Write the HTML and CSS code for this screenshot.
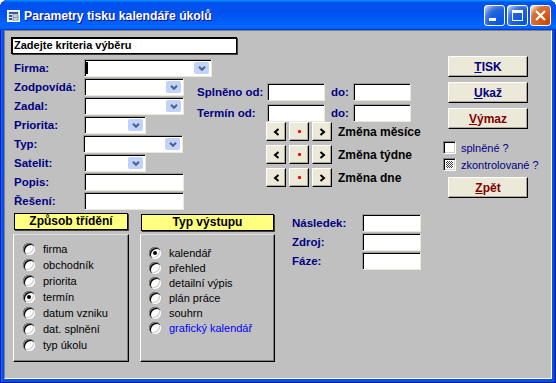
FILE: index.html
```html
<!DOCTYPE html>
<html lang="cs">
<head>
  <meta charset="UTF-8" />
  <title>Parametry tisku kalendáře úkolů</title>
  <link rel="stylesheet" href="styles.css">
</head>
<body>
  <div class="window">
    <!-- TITULKOVÝ PRUH -->
    <div class="titlebar">
      <svg class="app-icon" width="13" height="12" viewBox="0 0 13 12">
        <rect x="0.5" y="0.5" width="12" height="11" fill="#dfe7f5" stroke="#ffffff"/>
        <rect x="2" y="2" width="9" height="2" fill="#3d5a8c"/>
        <rect x="2" y="5" width="3" height="2" fill="#3d5a8c"/>
        <rect x="6" y="5" width="5" height="2" fill="#ffffff" stroke="#3d5a8c" stroke-width="0.6"/>
        <rect x="2" y="8" width="3" height="2" fill="#3d5a8c"/>
        <rect x="6" y="8" width="5" height="2" fill="#ffffff" stroke="#3d5a8c" stroke-width="0.6"/>
      </svg>
      <span class="title">Parametry tisku kalendáře úkolů</span>
      <div class="controls">
        <span class="ctl">
          <svg width="19" height="19"><rect x="4" y="12" width="7" height="3" fill="#fff"/></svg>
        </span>
        <span class="ctl">
          <svg width="19" height="19"><rect x="4.5" y="4.5" width="10" height="10" fill="none" stroke="#fff"/><rect x="4" y="4" width="11" height="3" fill="#fff"/></svg>
        </span>
        <span class="ctl close">
          <svg width="19" height="19"><path d="M5 5 L14 14 M14 5 L5 14" stroke="#fff" stroke-width="2.2"/></svg>
        </span>
      </div>
    </div>

    <div class="client">
      <div class="hint">Zadejte kriteria výběru</div>

      <div class="main">
        <!-- FILTRY -->
        <div class="filters">
          <span class="label">Firma:</span>
          <span class="field w128"><span class="caret"></span><span class="drop"><svg width="8" height="5"><path d="M1 0.8 L4 3.8 L7 0.8" fill="none" stroke="#4d6185" stroke-width="2"/></svg></span></span>
          <span class="label">Zodpovídá:</span>
          <span class="field w100"><span class="drop"><svg width="8" height="5"><path d="M1 0.8 L4 3.8 L7 0.8" fill="none" stroke="#4d6185" stroke-width="2"/></svg></span></span>
          <span class="label">Zadal:</span>
          <span class="field w100"><span class="drop"><svg width="8" height="5"><path d="M1 0.8 L4 3.8 L7 0.8" fill="none" stroke="#4d6185" stroke-width="2"/></svg></span></span>
          <span class="label">Priorita:</span>
          <span class="field w62"><span class="drop"><svg width="8" height="5"><path d="M1 0.8 L4 3.8 L7 0.8" fill="none" stroke="#4d6185" stroke-width="2"/></svg></span></span>
          <span class="label">Typ:</span>
          <span class="field w100 shift"><span class="drop"><svg width="8" height="5"><path d="M1 0.8 L4 3.8 L7 0.8" fill="none" stroke="#4d6185" stroke-width="2"/></svg></span></span>
          <span class="label">Satelit:</span>
          <span class="field w62"><span class="drop"><svg width="8" height="5"><path d="M1 0.8 L4 3.8 L7 0.8" fill="none" stroke="#4d6185" stroke-width="2"/></svg></span></span>
          <span class="label">Popis:</span>
          <span class="field w100"></span>
          <span class="label">Řešení:</span>
          <span class="field w100"></span>
        </div>

        <!-- TERMÍNY -->
        <div class="dates">
          <div class="range">
            <span class="label">Splněno od:</span>
            <span class="field"></span>
            <span class="label do">do:</span>
            <span class="field"></span>
            <span class="label">Termín od:</span>
            <span class="field"></span>
            <span class="label do">do:</span>
            <span class="field"></span>
          </div>
          <div class="nav">
            <div class="nav-row">
              <span class="navbtn"><svg width="7" height="8"><path d="M5.5 1 L2 4 L5.5 7" fill="none" stroke="#000" stroke-width="2"/></svg></span>
              <span class="navbtn"><span class="dot"></span></span>
              <span class="navbtn"><svg width="7" height="8"><path d="M1.5 1 L5 4 L1.5 7" fill="none" stroke="#000" stroke-width="2"/></svg></span>
              <span class="nav-label">Změna měsíce</span>
            </div>
            <div class="nav-row">
              <span class="navbtn"><svg width="7" height="8"><path d="M5.5 1 L2 4 L5.5 7" fill="none" stroke="#000" stroke-width="2"/></svg></span>
              <span class="navbtn"><span class="dot"></span></span>
              <span class="navbtn"><svg width="7" height="8"><path d="M1.5 1 L5 4 L1.5 7" fill="none" stroke="#000" stroke-width="2"/></svg></span>
              <span class="nav-label">Změna týdne</span>
            </div>
            <div class="nav-row">
              <span class="navbtn"><svg width="7" height="8"><path d="M5.5 1 L2 4 L5.5 7" fill="none" stroke="#000" stroke-width="2"/></svg></span>
              <span class="navbtn"><span class="dot"></span></span>
              <span class="navbtn"><svg width="7" height="8"><path d="M1.5 1 L5 4 L1.5 7" fill="none" stroke="#000" stroke-width="2"/></svg></span>
              <span class="nav-label">Změna dne</span>
            </div>
          </div>
        </div>

        <!-- TLAČÍTKA -->
        <div class="actions">
          <span class="btn"><u>T</u>ISK</span>
          <span class="btn"><u>U</u>kaž</span>
          <span class="btn red"><u>V</u>ýmaz</span>
          <div class="checks">
            <div class="check-row"><span class="check"></span>splněné ?</div>
            <div class="check-row"><span class="check mixed"></span>zkontrolované ?</div>
          </div>
          <span class="btn red back"><u>Z</u>pět</span>
        </div>
      </div>

      <div class="bottom">
        <div class="group sort">
          <div class="group-title">Způsob třídění</div>
          <div class="frame">
            <div class="option"><span class="radio"></span>firma</div>
            <div class="option"><span class="radio"></span>obchodník</div>
            <div class="option"><span class="radio"></span>priorita</div>
            <div class="option"><span class="radio on"></span>termín</div>
            <div class="option"><span class="radio"></span>datum vzniku</div>
            <div class="option"><span class="radio"></span>dat. splnění</div>
            <div class="option"><span class="radio"></span>typ úkolu</div>
          </div>
        </div>

        <div class="group output">
          <div class="group-title">Typ výstupu</div>
          <div class="frame">
            <div class="option"><span class="radio on"></span>kalendář</div>
            <div class="option"><span class="radio"></span>přehled</div>
            <div class="option"><span class="radio"></span>detailní výpis</div>
            <div class="option"><span class="radio"></span>plán práce</div>
            <div class="option"><span class="radio"></span>souhrn</div>
            <div class="option link"><span class="radio"></span>grafický kalendář</div>
          </div>
        </div>

        <div class="extra">
          <span class="label">Následek:</span>
          <span class="field"></span>
          <span class="label">Zdroj:</span>
          <span class="field"></span>
          <span class="label">Fáze:</span>
          <span class="field"></span>
        </div>
      </div>
    </div>
  </div>
</body>
</html>
```

FILE: styles.css
```css
body {
  margin: 0;
  background: #ffffff;
  font-family: "Liberation Sans", Arial, sans-serif;
  font-size: 11px;
}

.window {
  width: 556px;
  height: 383px;
  box-sizing: border-box;
  display: flex;
  flex-direction: column;
  padding: 0 4px 4px;
  background: #0a4fe2;
  border-radius: 8px 8px 0 0;
  box-shadow: inset 1px 0 #0019cf, inset -1px 0 #001ea0, inset 0 -1px #001ea0,
    inset 2px 0 #166aee, inset -2px 0 #0a3fd0;
}

/* titulek */
.titlebar {
  height: 30px;
  margin: 0 -4px;
  display: flex;
  align-items: center;
  padding: 0 5px 0 7px;
  background: linear-gradient(180deg, #0997ff, #0053ee 8%, #0050ee 40%, #0066ff 88%, #0066ff 93%, #005bff 95%, #003dd7 96%, #003dd7);
  border-radius: 8px 8px 0 0;
}

.app-icon {
  margin-right: 4px;
  margin-top: 1px;
}

.title {
  flex: 1;
  color: #ffffff;
  font-weight: bold;
  font-size: 12.2px;
  text-shadow: 1px 1px #0f1089;
  margin-top: 1px;
}

.controls {
  display: flex;
  gap: 2px;
  align-self: flex-start;
  margin-top: 5px;
}

.ctl {
  width: 21px;
  height: 21px;
  box-sizing: border-box;
  border: 1px solid #ffffff;
  border-radius: 3px;
  background: radial-gradient(circle at 90% 90%, #0054e9 0%, #2263d5 55%, #4479e4 70%, #a3bbec 90%, #ffffff 100%);
  display: flex;
}

.ctl.close {
  background: radial-gradient(circle at 90% 90%, #cc4600 0%, #dc6527 55%, #cd7546 70%, #ffccb2 90%, #ffffff 100%);
}

/* plocha formuláře */
.client {
  flex: 1;
  background: #c0c0c0;
  border: 1px solid;
  border-color: #808080 #ffffff #ffffff #808080;
}

.hint {
  width: 226px;
  height: 17px;
  box-sizing: border-box;
  margin: 6px 0 0 6px;
  padding-left: 1px;
  background: #ffffff;
  border: 2px solid #000000;
  border-right-width: 1px;
  border-bottom-width: 1px;
  box-shadow: 1px 1px 0 #404040;
  font-weight: bold;
  font-size: 11px;
  line-height: 13px;
}

.main {
  display: flex;
  margin-top: 2px;
  height: 154px;
}

.label {
  color: #000080;
  font-weight: bold;
  font-size: 11.5px;
  align-self: center;
  white-space: nowrap;
}

.field {
  box-sizing: border-box;
  height: 18px;
  background: #ffffff;
  border: 1px solid;
  border-color: #9d9d9d #ece9d8 #ece9d8 #9d9d9d;
  box-shadow: inset 1px 1px #000000;
  display: flex;
  align-items: center;
  justify-content: flex-end;
  padding: 0 2px 0 1px;
}

.w128 { width: 128px; }
.w100 { width: 100px; }
.w62 { width: 62px; }
.shift { margin-left: -1px; }

.caret {
  width: 2px;
  height: 12px;
  background: #000000;
  margin-right: auto;
}

.drop {
  width: 15px;
  height: 12px;
  border-radius: 2px;
  background: #c1d3fb;
  display: flex;
  align-items: center;
  justify-content: center;
}

.filters {
  width: 183px;
  padding: 3px 0 0 9px;
  display: grid;
  grid-template-columns: 70px auto;
  grid-auto-rows: 18px;
  row-gap: 1px;
  align-content: start;
}

.dates {
  width: 246px;
  padding-top: 27px;
}

.range {
  display: grid;
  grid-template-columns: 70px 58px 28px 58px;
  grid-auto-rows: 18px;
  row-gap: 3px;
}

.range .do {
  padding-left: 6px;
}

.nav {
  display: flex;
  flex-direction: column;
  gap: 4px;
  padding-left: 69px;
}

.nav-row {
  display: flex;
  align-items: center;
  gap: 3px;
  height: 19px;
}

.navbtn {
  width: 20px;
  height: 19px;
  box-sizing: border-box;
  background: #ece9d8;
  border: 1px solid;
  border-color: #ffffff #000000 #000000 #ffffff;
  box-shadow: inset -1px -1px #aca899;
  display: flex;
  align-items: center;
  justify-content: center;
}

.dot {
  width: 3px;
  height: 3px;
  background: #ff0000;
  border-radius: 1px;
}

.nav-label {
  margin-left: 3px;
  font-weight: bold;
  font-size: 12px;
  color: #000000;
}

.actions {
  display: flex;
  flex-direction: column;
  align-items: flex-start;
}

.btn {
  width: 80px;
  height: 21px;
  box-sizing: border-box;
  margin: 0 0 5px 5px;
  background: #ece9d8;
  border: 1px solid;
  border-color: #ffffff #000000 #000000 #ffffff;
  box-shadow: inset -1px -1px #aca899;
  display: flex;
  align-items: center;
  justify-content: center;
  font-weight: bold;
  font-size: 12px;
  color: #000080;
}

.btn.red {
  color: #800000;
}

.btn.back {
  margin-top: 6px;
}

.checks {
  display: flex;
  flex-direction: column;
  gap: 4px;
  margin-top: 7px;
}

.check-row {
  display: flex;
  align-items: center;
  gap: 5px;
  height: 13px;
  color: #000080;
  font-size: 11px;
}

.check {
  width: 13px;
  height: 13px;
  box-sizing: border-box;
  border: 1px solid;
  border-color: #808080 #ffffff #ffffff #808080;
  box-shadow: inset 1px 1px #000000, inset -1px -1px #d4d0c8;
  background: #ffffff;
}

.check.mixed {
  padding: 2px;
  background: repeating-conic-gradient(#404040 0 25%, #ffffff 0 50%) 0 0 / 2px 2px content-box, #ffffff;
}

/* spodní část */
.bottom {
  display: flex;
  align-items: flex-start;
  margin-top: 3px;
  padding-left: 8px;
}

.group {
  display: flex;
  flex-direction: column;
}

.sort { width: 116px; }

.output {
  width: 135px;
  margin-left: 11px;
}

.group-title {
  height: 17px;
  box-sizing: border-box;
  margin: 0 1px;
  background: #ffff80;
  border: 1px solid #000000;
  box-shadow: 1px 1px 0 #404040;
  text-align: center;
  font-weight: bold;
  font-size: 12px;
  line-height: 15px;
}

.output .group-title {
  margin-top: 1px;
}

.frame {
  height: 128px;
  box-sizing: border-box;
  margin-top: 4px;
  border: 1px solid;
  border-color: #e0e0e0 #000000 #000000 #ffffff;
  box-shadow: inset -1px -1px #808080;
  padding: 6px 0 0 9px;
}

.output .frame {
  margin-top: 3px;
  padding: 10px 0 0 8px;
}

.option {
  display: flex;
  align-items: center;
  gap: 8px;
  height: 16px;
  font-size: 11px;
}

.output .option {
  height: 15px;
}

.option.link {
  color: #0000ff;
}

.radio {
  width: 12px;
  height: 12px;
  flex: none;
  border-radius: 50%;
  background: #ffffff;
  box-shadow: inset 1px 1px #808080, inset 2px 2px #000000, inset -1px -1px #ffffff, inset -2px -2px #d4d0c8;
  display: flex;
  align-items: center;
  justify-content: center;
}

.radio.on::after {
  content: "";
  width: 4px;
  height: 4px;
  border-radius: 50%;
  background: #000000;
}

.extra {
  margin-left: 17px;
  padding-top: 1px;
  display: grid;
  grid-template-columns: 70px 59px;
  grid-auto-rows: 17px;
  row-gap: 2px;
}
```
